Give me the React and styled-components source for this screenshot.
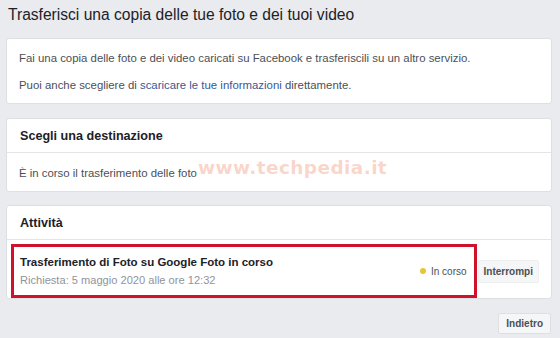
import React from 'react';
import styled, { createGlobalStyle } from 'styled-components';

const pageBg = '#e9ebee';
const cardBg = '#ffffff';
const cardBorder = '#dddfe2';
const textDark = '#1d2129';
const textBody = '#4b4f56';
const textGrey = '#90949c';
const linkBlue = '#365899';
const highlightRed = '#d0112b';

const GlobalStyle = createGlobalStyle`
  html, body {
    margin: 0;
    padding: 0;
    background: ${pageBg};
  }
  body {
    font-family: "Liberation Sans", Arial, sans-serif;
    color: ${textDark};
  }
`;

const Page = styled.div`
  position: relative;
  width: 560px;
  height: 338px;
  box-sizing: border-box;
  padding: 5px 8px 0 6px;
  display: flex;
  flex-direction: column;
`;

const PageTitle = styled.h1`
  margin: 0 0 0 2px;
  font-size: 15.6px;
  font-weight: normal;
  line-height: 20px;
  color: ${textDark};
`;

const Card = styled.section`
  background: ${cardBg};
  border: 1px solid ${cardBorder};
  border-radius: 3px;
  margin-top: ${(p) => p.$top || 13}px;
`;

const CardHeader = styled.div`
  height: 33px;
  display: flex;
  align-items: center;
  padding: 0 13px;
  border-bottom: 1px solid #e5e5e5;
  font-size: 12.6px;
  font-weight: bold;
  color: ${textDark};
`;

const CardBody = styled.div`
  padding: ${(p) => p.$pad || '12px 12px'};
  font-size: 11.4px;
  line-height: 14px;
  color: ${textBody};
`;

const Paragraph = styled.p`
  margin: 0;
  & + & {
    margin-top: 13px;
  }
`;

const Link = styled.a`
  color: ${linkBlue};
  text-decoration: none;
`;

const ActivityRow = styled.div`
  display: flex;
  align-items: center;
  padding: 4px 12px 0 4px;
`;

const Highlight = styled.div`
  flex: 1;
  height: 48px;
  display: flex;
  align-items: center;
  border: 3px solid ${highlightRed};
  padding: 0 7px 0 6px;
`;

const Info = styled.div`
  flex: 1;
  display: flex;
  flex-direction: column;
  gap: 6px;
`;

const InfoTitle = styled.div`
  font-size: 11.5px;
  font-weight: bold;
  color: ${textDark};
`;

const InfoSub = styled.div`
  font-size: 11.1px;
  color: ${textGrey};
`;

const Status = styled.div`
  display: flex;
  align-items: center;
  gap: 5px;
  font-size: 10px;
  color: ${textBody};
`;

const Dot = styled.span`
  width: 6px;
  height: 6px;
  border-radius: 50%;
  background: #e7c534;
`;

const Button = styled.button`
  font-family: "Liberation Sans", Arial, sans-serif;
  font-size: 10px;
  font-weight: bold;
  color: ${textBody};
  background: #f5f6f7;
  border: 1px solid ${(p) => (p.$bordered ? cardBorder : '#eceef0')};
  border-radius: 2px;
  height: ${(p) => p.$h || 23}px;
  padding: 0 ${(p) => p.$px || 5}px;
  margin-left: ${(p) => p.$ml || 0}px;
`;

const Footer = styled.div`
  display: flex;
  justify-content: flex-end;
  margin-top: 14px;
  padding-right: 1px;
`;

const Watermark = styled.div`
  position: absolute;
  left: 198px;
  top: 157px;
  font-family: "DejaVu Sans", sans-serif;
  font-weight: bold;
  font-size: 18.5px;
  letter-spacing: 0.4px;
  color: rgba(238, 125, 85, 0.32);
  pointer-events: none;
`;

export default function App() {
  return (
    <>
      <GlobalStyle />
      <Page>
        <PageTitle>Trasferisci una copia delle tue foto e dei tuoi video</PageTitle>

        <Card $top={13}>
          <CardBody $pad="12px 12px 11px">
            <Paragraph>
              Fai una copia delle foto e dei video caricati su Facebook e trasferiscili su un altro servizio.
            </Paragraph>
            <Paragraph>
              Puoi anche scegliere di <Link href="#">scaricare le tue informazioni</Link> direttamente.
            </Paragraph>
          </CardBody>
        </Card>

        <Card $top={14}>
          <CardHeader>Scegli una destinazione</CardHeader>
          <CardBody $pad="13px 12px 11px">
            <Paragraph>È in corso il trasferimento delle foto</Paragraph>
          </CardBody>
        </Card>

        <Card>
          <CardHeader>Attività</CardHeader>
          <ActivityRow>
            <Highlight>
              <Info>
                <InfoTitle>Trasferimento di Foto su Google Foto in corso</InfoTitle>
                <InfoSub>Richiesta: 5 maggio 2020 alle ore 12:32</InfoSub>
              </Info>
              <Status>
                <Dot />
                In corso
              </Status>
            </Highlight>
            <Button $ml={1}>Interrompi</Button>
          </ActivityRow>
        </Card>

        <Footer>
          <Button $bordered $h={21} $px={7}>Indietro</Button>
        </Footer>

        <Watermark>www.techpedia.it</Watermark>
      </Page>
    </>
  );
}
